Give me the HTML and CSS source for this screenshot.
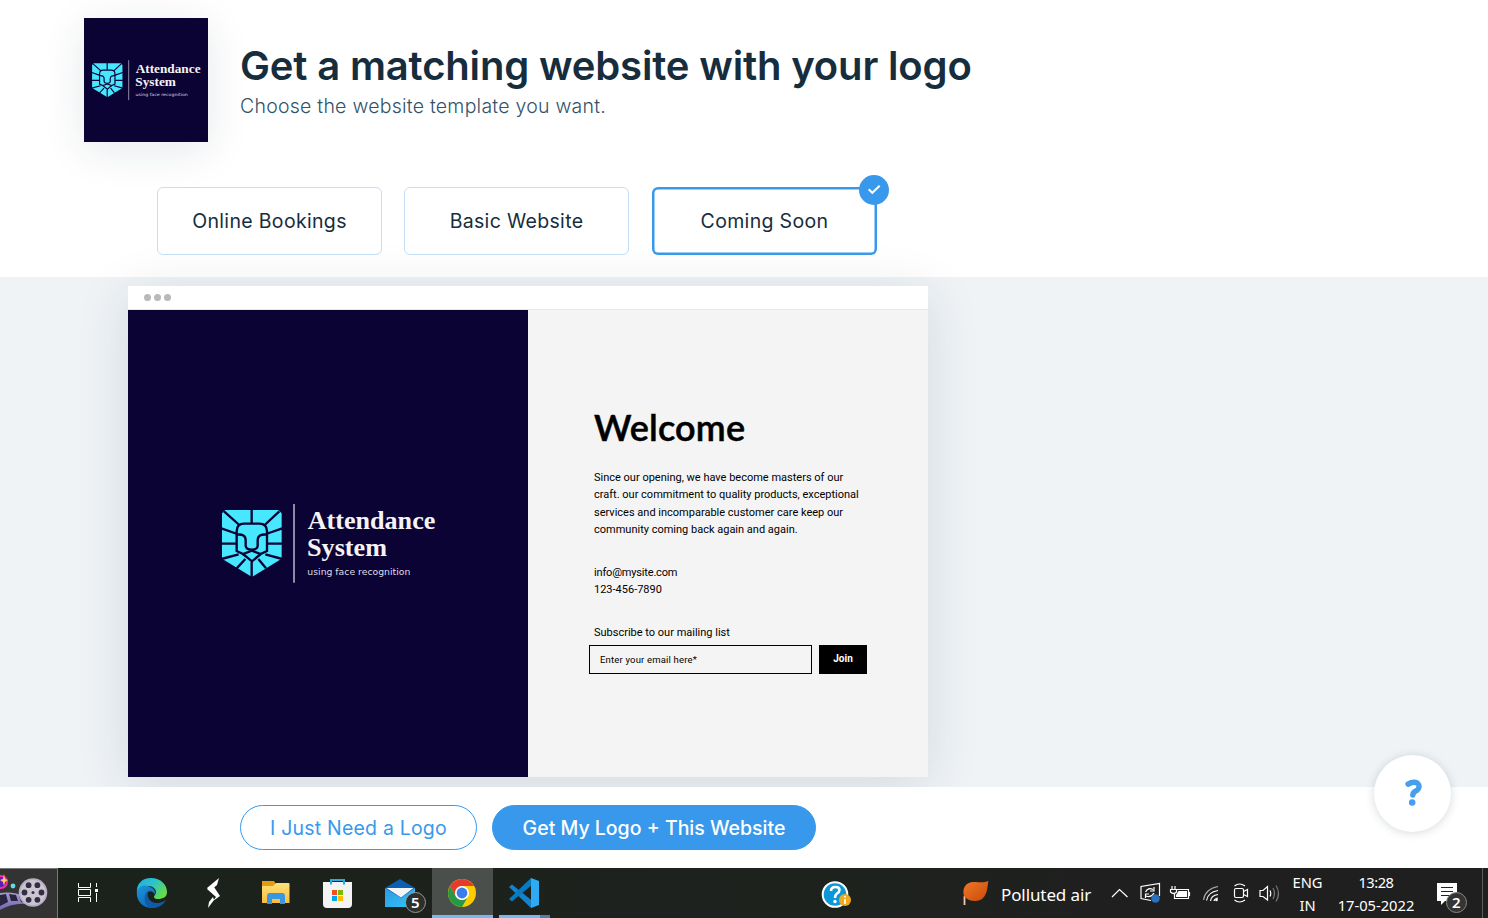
FILE: index.html
```html
<!DOCTYPE html>
<html lang="en">
<head>
<meta charset="utf-8">
<title>Get a matching website with your logo</title>
<link rel="stylesheet" href="styles.css">
</head>
<body>
<svg class="defs" aria-hidden="true">
  <symbol id="mark" viewBox="0 0 720 330">
    <path fill="#47e7ff" d="M46 60H205L215 70V206L126 261L36 206V70Z"/>
    <g fill="none" stroke="#0b0333" stroke-width="7">
      <path d="M125 58V99M42 64L88 105M208 64L164 105M34 115L82 132M217 115L168 132M34 161H80M217 161H170M34 207L86 193M217 207L166 193M80 235L106 207M168 235L145 207M125 216V264"/>
      <path d="M80 183V124Q80 101 102 101H148Q171 101 171 124V183L152 192L126 214L99 192Z"/>
      <path d="M80 134Q107 131 107 151V168Q109 179 125 179Q142 179 143 168V151Q143 131 171 134M97 193L125 182L154 193"/>
    </g>
    <path d="M252 42V278" stroke="#aaa5bc" stroke-width="5"/>
  </symbol>
  <linearGradient id="edge" x2="1" y2=".6"><stop stop-color="#25a9dc"/><stop offset=".5" stop-color="#2ac3ce"/><stop offset="1" stop-color="#67dc45"/></linearGradient>
  <linearGradient id="edgeb" x2="1" y2="1"><stop stop-color="#1b97dd"/><stop offset="1" stop-color="#0b559f"/></linearGradient>
  <linearGradient id="fold" x2="0" y2="1"><stop stop-color="#ffe07a"/><stop offset="1" stop-color="#f8bd3c"/></linearGradient>
  <linearGradient id="mail" x2="1" y2="1"><stop stop-color="#2a9be6"/><stop offset="1" stop-color="#33c3f3"/></linearGradient>
  <linearGradient id="leaf" x2="1" y2="1"><stop stop-color="#f0782a"/><stop offset="1" stop-color="#c94a08"/></linearGradient>
  <linearGradient id="strip" x2="0" y2="1"><stop stop-color="#a79bd2"/><stop offset="1" stop-color="#6e68ad"/></linearGradient>
</svg>

<header class="top">
  <div class="brand">
    <div class="thumb"><svg class="thumb-logo" viewBox="0 0 720 330"><use href="#mark"/>
      <text class="logo-name" x="293" y="120" textLength="383" lengthAdjust="spacingAndGlyphs">Attendance</text>
      <text class="logo-name" x="291" y="197" textLength="240" lengthAdjust="spacingAndGlyphs">System</text>
      <text class="logo-tag" x="292" y="255" textLength="309" lengthAdjust="spacingAndGlyphs">using face recognition</text></svg></div>
    <div class="heads">
      <h1>Get a matching website with your logo</h1>
      <p class="sub">Choose the website template you want.</p>
    </div>
  </div>
  <nav class="tabs">
    <button class="tab"><span>Online Bookings</span></button>
    <button class="tab"><span>Basic Website</span></button>
    <button class="tab selected"><span>Coming Soon</span>
      <svg class="check" viewBox="0 0 30 30"><circle cx="15" cy="15" r="15" fill="#3899ec"/><path d="M9.7 14.3L13.3 17.8L20.7 10.7" fill="none" stroke="#fff" stroke-width="2"/></svg>
    </button>
  </nav>
</header>

<main class="stage">
  <section class="preview">
    <div class="chrome-bar"><i></i><i></i><i></i></div>
    <div class="site">
      <div class="site-left"><svg class="big-logo" viewBox="0 0 720 330"><use href="#mark"/>
        <text class="logo-name" x="293" y="118" textLength="383" lengthAdjust="spacingAndGlyphs">Attendance</text>
        <text class="logo-name" x="291" y="197" textLength="240" lengthAdjust="spacingAndGlyphs">System</text>
        <text class="logo-tag" x="292" y="255" textLength="309" lengthAdjust="spacingAndGlyphs">using face recognition</text></svg></div>
      <div class="site-right">
        <h2>Welcome</h2>
        <p class="copy"><span>Since our opening, we have become masters of our</span><br><span>craft. our commitment to quality products, exceptional</span><br><span>services and incomparable customer care keep our</span><br><span>community coming back again and again.</span></p>
        <p class="contact"><span class="mailto">info@mysite.com</span><br><span>123-456-7890</span></p>
        <p class="subscribe">Subscribe to our mailing list</p>
        <div class="form"><div class="email">Enter your email here*</div><div class="join">Join</div></div>
      </div>
    </div>
  </section>
</main>

<footer class="actions">
  <button class="pill outline"><span>I Just Need a Logo</span></button>
  <button class="pill solid"><span>Get My Logo + This Website</span></button>
  <div class="help"><svg viewBox="0 0 78 78"><path d="M34.500 29.500Q39.500 26.300 43.800 28.300Q47.800 32 43.300 36Q39.500 37.500 39.300 40.500" fill="none" stroke="#459fed" stroke-width="5.500" stroke-linecap="round" stroke-linejoin="round"/><circle cx="38.700" cy="48" r="3.300" fill="#459fed"/></svg></div>
</footer>

<div class="taskbar">
  <div class="film"><svg viewBox="0 868 57 50">
    <path d="M0 893Q14 891 29 898L36 906Q18 900 0 910Z" fill="url(#strip)"/>
    <path d="M0 895L6 894L8 902L0 906ZM9 894L16 895L18 901L11 901ZM19 896L26 899L29 903L21 902Z" fill="#29243f"/>
    <circle cx="1" cy="882" r="6" fill="#5f1eb1" stroke="#f72ba4" stroke-width="2"/><path d="M4 874L5 879L8 880L5 882L4 886L3 882L0 880L3 879Z" fill="#ffc66d"/>
    <circle cx="13" cy="886" r="2.400" fill="#68d8e5"/>
    <circle cx="33" cy="892.500" r="14.300" fill="#b6afc2"/><circle cx="33" cy="892.500" r="12.500" fill="#cbc5d2"/>
    <g fill="#342e43"><circle cx="28.600" cy="885.200" r="2.900"/><circle cx="37.400" cy="885.200" r="2.900"/><circle cx="24.500" cy="892.500" r="2.900"/><circle cx="41.500" cy="892.500" r="2.900"/><circle cx="28.600" cy="899.800" r="2.900"/><circle cx="37.400" cy="899.800" r="2.900"/><circle cx="33" cy="892.500" r="1.500"/></g></svg></div>
  <div class="apps">
    <div class="app"><svg viewBox="58 868 62 50"><g fill="none" stroke="#fff" stroke-width="1"><path d="M78.500 883V887.500H90.500V883M78.500 902V897.500H90.500V902M78.500 889.500H90.500V895.500H78.500ZM96.500 883V887M96.500 893V902"/></g><rect x="95" y="889" width="3" height="3" fill="#fff"/></svg></div>
    <div class="app"><svg viewBox="120 868 62 50"><path d="M137 893C136 884 142 878 151 878C161 878 167 885 167 892C167 897 163 899 158 899C154 899 153 897 155 895C158 891 154 886 148 886C142 886 138 889 137 893Z" fill="url(#edge)"/><path d="M137 891C139 886 145 884 150 887C154 888 156 892 155 895C153 890 147 890 146 896C146 902 155 906 165 901C160 908 151 910 144 906C139 903 136 897 137 891Z" fill="url(#edgeb)"/><path d="M149 890C145 897 151 904 158 903C162 903 165 901 166.500 899C164 905 158 908 152 908C144 907 142 895 149 890Z" fill="#0e5ba8"/></svg></div>
    <div class="app"><svg viewBox="183 868 62 50"><g fill="#fff"><path d="M219 878L217 885L210 891L207 888Z"/><path d="M207 889L213 885.500L220 896L213 901L216 897Z"/><path d="M208 908L209 902L213 897L214 900Z"/></g></svg></div>
    <div class="app"><svg viewBox="245 868 62 50"><path d="M262 881H274L276 884H289V903H262Z" fill="#e49b0c"/><path d="M262 886H273L276 883H288.500Q289.500 883 289.500 884V903H262Z" fill="url(#fold)"/><path d="M267 904V896Q267 893 270 893H282Q285 893 285 896V904H280V899H272V904Z" fill="#3b96e0"/></svg></div>
    <div class="app"><svg viewBox="307 868 62 50"><path d="M331 884.500V880H344V884.500" fill="none" stroke="#29abe2" stroke-width="2"/><path d="M323 882H352V904Q352 908 348 908H327Q323 908 323 904Z" fill="#f3f3f3"/><path d="M331 880V884.500M344 880V884.500" stroke="#29abe2" stroke-width="2"/><path d="M332 890H337V895H332Z" fill="#f05022"/><path d="M338 890H343V895H338Z" fill="#7fba00"/><path d="M332 896H337V901H332Z" fill="#00a4ef"/><path d="M338 896H343V901H338Z" fill="#ffb900"/></svg></div>
    <div class="app"><svg viewBox="370 868 62 50"><path d="M385 888L400 879L415 888V898H385Z" fill="#0b5eb1"/><path d="M385 888L401 898L415 888V907H385Z" fill="url(#mail)"/><path d="M386.500 888H413.500L401 897.500Z" fill="#f2f4f8"/><circle cx="415.500" cy="902.500" r="10" fill="#2b302d" stroke="#969996"/><text x="411" y="908" class="badge">5</text></svg></div>
    <div class="app active"><svg viewBox="432 868 62 50"><circle cx="462" cy="893" r="14" fill="#fc0"/><path d="M449.900 886A14 14 0 0 1 474.100 886H462A7 7 0 0 0 456 896.500Z" fill="#e53a2f"/><path d="M449.900 886A14 14 0 0 0 462 907L468 896.500A7 7 0 0 1 456 896.500Z" fill="#279847"/><circle cx="462" cy="893" r="7" fill="#fff"/><circle cx="462" cy="893" r="5.400" fill="#3b7ded"/></svg></div>
    <div class="app open"><svg viewBox="494 868 62 50"><path d="M509 887L512 884.500L535 903L531 908Z" fill="#1383cd"/><path d="M509 899L512 901.500L532 885L531 878Z" fill="#087abf"/><path d="M531 878L539 881V905L531 908Z" fill="#2faaf4"/></svg></div>
  </div>
  <svg class="assist" viewBox="820 868 34 50"><circle cx="835" cy="894.500" r="12.300" fill="#0d97d8" stroke="#fff" stroke-width="2"/><path d="M831 891Q831 887 835.500 887Q839.500 887 839.500 890Q839.500 892 837 893.500Q835 895 835 898" fill="none" stroke="#fff" stroke-width="2.600"/><circle cx="835" cy="901.500" r="1.700" fill="#fff"/><circle cx="845" cy="900" r="6" fill="#efab1b"/><path d="M845 899V904M845 896V897.500" stroke="#fff" stroke-width="1.800"/></svg>
  <div class="weather"><svg viewBox="960 868 32 50"><path d="M964.500 905V897Q965 894 968 893" fill="none" stroke="#f4c4a8" stroke-width="1.800"/><path d="M988.500 881C987 884 989 901 975 901Q969 901 966 898L964 896C962 889 965 882 974 882C980 882 984 883 988.500 881Z" fill="url(#leaf)"/></svg><span>Polluted air</span></div>
  <svg class="tray" viewBox="1108 868 176 50" fill="none" stroke="#fff" stroke-width="1.200">
    <path d="M1112 897L1119.500 889.500L1127.500 897"/>
    <path d="M1151 900.500L1141 898.500V886.500L1159.500 883.500V896M1145.500 892Q1148 887 1153 889.500M1154 887V891H1150M1154 893Q1151 898 1146 896M1145.500 898V894H1149"/><circle cx="1155.500" cy="898.500" r="4.300" fill="#2871bd" stroke="none"/>
    <path d="M1177 889.500H1188.500V898.500H1174.500V894M1172 886V889M1175 886V889M1170.500 889.500H1176.500V892Q1173.500 895 1170.500 892Z"/><path d="M1178.500 891H1187V897H1176V895Z" fill="#fff" stroke="none"/><path d="M1189.500 892V896"/>
    <path d="M1203.500 900Q1205 889 1218 886.500" stroke="#aaa"/><path d="M1206.500 900.500Q1208 892 1218 890.500M1210.500 901Q1211 895.500 1218 894.500M1214 901Q1214.500 898.500 1218 898"/><circle cx="1216.500" cy="900" r="1.300" fill="#fff" stroke="none"/>
    <rect x="1234.500" y="888.500" width="9" height="9" rx="1.500"/><path d="M1243.500 891.500L1247.500 889.500V896.500L1243.500 894.500M1234.500 886Q1239.500 882 1245 886M1234.500 900Q1239.500 904 1245 900"/>
    <path d="M1260 890.500H1263L1267.500 886.500V900L1263 896.500H1260ZM1270 890.500Q1271.500 893.500 1270 896.500"/><path d="M1273 888Q1276 893.500 1273 899M1276 885.500Q1281 893.500 1276 901.500" stroke="#777"/>
  </svg>
  <div class="lang"><span>ENG</span><span>IN</span></div>
  <div class="clock"><span class="time">13:28</span><span class="date">17-05-2022</span></div>
  <svg class="notes" viewBox="1430 868 58 50"><path d="M1437 883H1457V901H1445L1441 905V901H1437Z" fill="#fff"/><path d="M1441 887.500H1453M1441 891.500H1453M1441 895.500H1453" stroke="#222" stroke-width="1.200"/><circle cx="1456.500" cy="902.500" r="10" fill="#343434" stroke="#888"/><text x="1452" y="908" class="badge">2</text><path d="M1482.500 868V918" stroke="#5c5c5c"/></svg>
</div>
</body>
</html>
```

FILE: styles.css
```css
* { box-sizing: border-box; }
body { margin: 0; width: 1488px; height: 918px; overflow: hidden; background: #fff; font-family: Inter, "Open Sans", sans-serif; color: #162d3d; display: flex; flex-direction: column; }
h1, h2, p { margin: 0; }
span { white-space: nowrap; }
svg { display: block; }
button { font: inherit; color: inherit; margin: 0; padding: 0; }
.defs { position: absolute; width: 0; height: 0; }
.logo-name { font: bold 78px "Liberation Serif", serif; fill: #f6f3f6; }
.logo-tag { font: 25px "DejaVu Sans", sans-serif; fill: #dedbe6; }

.top { height: 277px; padding: 18px 84px 0; }
.brand { display: flex; gap: 32px; }
.thumb { width: 124px; height: 124px; padding: 35px 0 0 2px; background: #0b0333; box-shadow: 0 8px 40px rgba(22, 45, 61, .11); }
.thumb-logo { width: 122px; height: 56px; }
.heads { padding-top: 20px; }
h1 { font-size: 40px; line-height: 56px; font-weight: 600; letter-spacing: -.16px; white-space: nowrap; }
.sub { font-size: 19.500px; line-height: 25px; color: #32536a; font-weight: 300; letter-spacing: .24px; white-space: nowrap; }
.tabs { display: flex; gap: 22px; margin: 45px 0 0 73px; }
.tab { position: relative; width: 225px; height: 68px; border: 1px solid #c4def5; border-radius: 6px; background: transparent; font-size: 19.500px; letter-spacing: .33px; display: flex; align-items: center; justify-content: center; }
.selected { margin-left: 1px; border: 0; box-shadow: inset 0 0 0 2.500px #3899ec; }
.check { position: absolute; right: -12px; top: -12px; width: 30px; height: 30px; }

.stage { height: 510px; padding: 9px 0 0 128px; background: #eff3f6; }
.preview { width: 800px; height: 491px; box-shadow: 0 8px 50px rgba(22, 45, 61, .12); }
.chrome-bar { height: 24px; padding: 0 0 1px 16px; display: flex; align-items: center; gap: 3px; background: #fff; border-bottom: 1px solid #e8e8e8; }
.chrome-bar i { width: 7px; height: 7px; border-radius: 50%; background: #b9b9b9; }
.site { display: flex; height: 467px; }
.site-left { width: 400px; background: #0b0333; padding: 180px 0 0 82px; }
.big-logo { width: 240px; height: 110px; }
.site-right { width: 400px; background: #f4f4f4; padding: 92px 0 0 66px; color: #000; font: 11px/17.400px Roboto, sans-serif; }
h2 { font: 600 36px/50px Lato, sans-serif; letter-spacing: .2px; -webkit-text-stroke: .5px #000; }
.copy { margin-top: 17px; }
.contact { margin-top: 25px; }
.mailto { letter-spacing: -.18px; }
.subscribe { margin-top: 26px; }
.form { display: flex; gap: 7px; margin: 3px 0 0 -5px; }
.email { width: 223px; height: 29px; border: 1px solid #000; padding-left: 10px; font-size: 9.500px; letter-spacing: .18px; line-height: 27px; }
.join { width: 48px; height: 29px; background: #000; color: #fff; font-weight: 700; font-size: 10px; line-height: 27px; text-align: center; }

.actions { position: relative; height: 81px; padding: 18px 0 0 240px; display: flex; gap: 15px; background: #fff; font-size: 19.500px; }
.pill { height: 45px; border-radius: 23px; border: 1px solid #3899ec; }
.outline { width: 237px; color: #3899ec; background: #fff; letter-spacing: .2px; }
.solid { width: 324px; color: #fff; background: #3899ec; font-weight: 500; }
.help { position: absolute; left: 1374px; top: -32px; width: 77px; height: 77px; border-radius: 50%; background: #fff; box-shadow: 0 1px 10px rgba(22, 45, 61, .18); }

.taskbar { height: 50px; display: flex; background: linear-gradient(90deg, #1b211b, #1e221e 60%, #1f1f1f 75%); color: #fff; font: 17px "Noto Sans", sans-serif; }
.film { width: 58px; height: 50px; background: #333; border: 1px solid #777; border-left: 0; border-bottom: 0; }
.film svg { width: 57px; height: 50px; margin-top: -1px; }
.apps { display: flex; width: 494px; }
.app { width: 62px; height: 50px; flex: none; }
.app:nth-child(3), .app:nth-child(6) { margin-left: 1px; }
.app svg { width: 62px; height: 50px; }
.active { width: 61px; background: #4b4f4b; box-shadow: inset 0 -3px #76b9ed; }
.open { margin-left: 1px; background: linear-gradient(90deg, #76b9ed 41px, #527fa1 41px) 5px 47px / 51px 3px no-repeat; }
.badge { font: 600 15px "Noto Sans", sans-serif; fill: #fff; stroke: none; }
.assist { width: 34px; height: 50px; margin-left: 268px; }
.weather { display: flex; width: 148px; margin-left: 106px; line-height: 53px; letter-spacing: -.1px; }
.weather svg { width: 32px; height: 50px; margin-right: 9px; flex: none; }
.tray { width: 176px; height: 50px; }
.lang, .clock { display: flex; flex-direction: column; align-items: center; line-height: 22.500px; padding-top: 3px; font-size: 14.700px; }
.lang { width: 47px; }
.clock { width: 90px; }
.time { letter-spacing: -.5px; }
.notes { width: 58px; height: 50px; margin-left: 9px; }
```
